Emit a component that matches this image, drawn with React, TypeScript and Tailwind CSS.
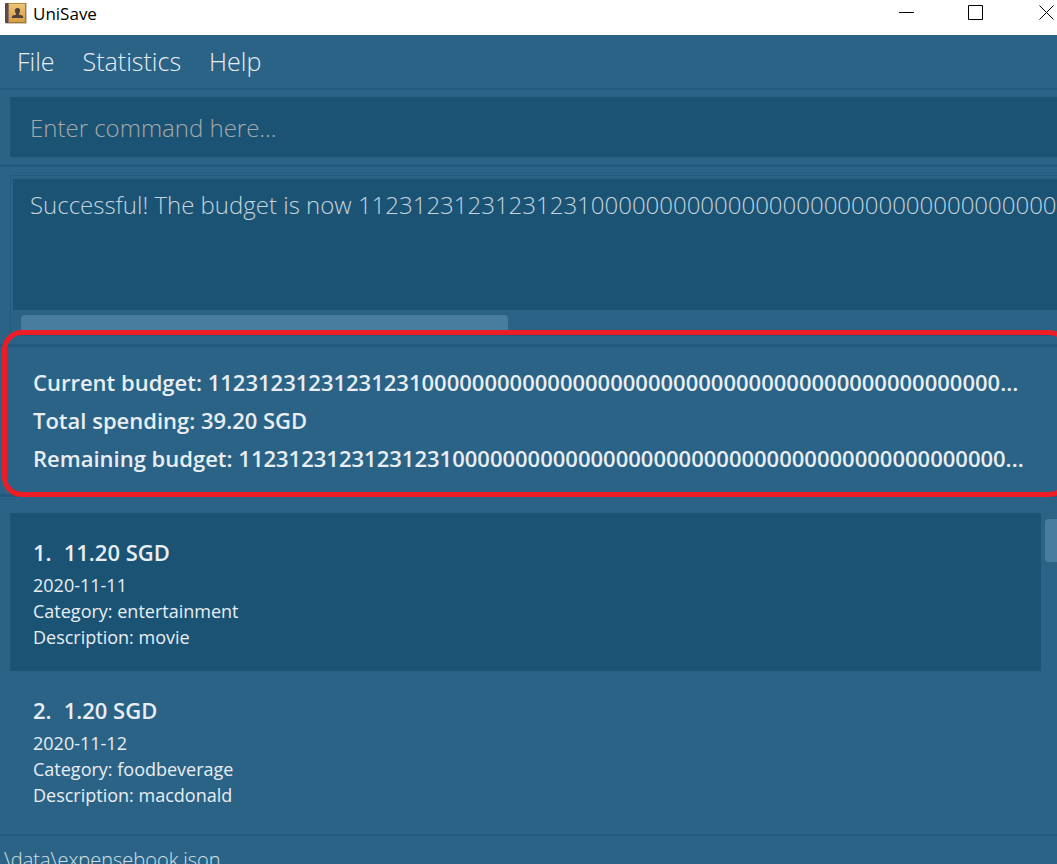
import React from "react";

const AMOUNT_PREFIX = "11231231231231231";

const budgetLines = [
  { label: "Current budget:", value: AMOUNT_PREFIX + "0".repeat(46) + "..." },
  { label: "Total spending:", value: "39.20 SGD" },
  { label: "Remaining budget:", value: AMOUNT_PREFIX + "0".repeat(44) + "..." },
];

const expenses = [
  { id: 1, amount: "11.20 SGD", date: "2020-11-11", category: "entertainment", description: "movie" },
  { id: 2, amount: "1.20 SGD", date: "2020-11-12", category: "foodbeverage", description: "macdonald" },
];

function BookIcon() {
  return (
    <svg className="h-6 w-6 shrink-0" viewBox="0 0 24 24" aria-hidden="true">
      <defs>
        <linearGradient id="cover" x1="0" y1="0" x2="0" y2="1">
          <stop offset="0" stopColor="#eec67c" />
          <stop offset="1" stopColor="#d59c3e" />
        </linearGradient>
      </defs>
      <rect x="1" y="2" width="22" height="21" rx="1" fill="#c9c5bf" />
      <rect x="1" y="2" width="5" height="20" rx="1" fill="#5d4a42" />
      <rect x="4" y="2" width="1" height="20" fill="#8a7364" />
      <rect x="5" y="2" width="17" height="20" fill="url(#cover)" />
      <path d="M5 2h17v1H5z" fill="#b98a3e" />
      <path d="M21 2h1v20h-1zM5 21h17v1H5z" fill="#a8782c" />
      <path
        d="M13.500 7c1.700 0 2.600 1.100 2.600 2.700 0 1.100-.5 2.100-1.100 2.700v1.300l3.200 .9c.6.2.9.6.9 1.200v1.100H7.900v-1.100c0-.6.3-1 .9-1.200l3.200-.9v-1.300c-.6-.6-1.100-1.600-1.100-2.700C10.900 8.100 11.800 7 13.500 7z"
        fill="#4f4236"
      />
    </svg>
  );
}

function TitleBar() {
  return (
    <header className="flex h-[35px] shrink-0 items-start justify-between bg-white text-black">
      <div className="flex items-center gap-[5px] pl-1">
        <BookIcon />
        <h1 className="pt-[2px] text-[17px] leading-6">UniSave</h1>
      </div>
      <div className="flex gap-[53px] pt-[5px] pr-[2px]">
        <button type="button" aria-label="Minimize">
          <svg className="h-4 w-4" viewBox="0 0 16 16" shapeRendering="crispEdges">
            <path d="M0 7h15v1H0z" />
          </svg>
        </button>
        <button type="button" aria-label="Maximize">
          <svg className="h-4 w-4" viewBox="0 0 16 16" fill="none" stroke="black">
            <path d="M.5.500h14v14H.5z" />
          </svg>
        </button>
        <button type="button" aria-label="Close" className="pl-[2px]">
          <svg className="h-4 w-4" viewBox="0 0 16 16" fill="none" stroke="black">
            <path d="M.5.500l14 14M14.500 .5l-14 14" />
          </svg>
        </button>
      </div>
    </header>
  );
}

export default function App() {
  return (
    <div className="flex h-screen flex-col overflow-hidden bg-[#2b6386] font-['Open_Sans','Noto_Sans',sans-serif] text-[#e8eef3]">
      <TitleBar />

      <nav className="flex h-[55px] shrink-0 items-start gap-7 border-b-2 border-[#225a7f] pt-2 pl-[17px] text-[25px] leading-9 font-light">
        <button type="button">File</button>
        <button type="button">Statistics</button>
        <button type="button">Help</button>
      </nav>

      <div className="shrink-0 border-b-3 border-[#225a7f] pt-[7px] pb-[7px] pl-[10px]">
        <input
          type="text"
          aria-label="Command"
          placeholder="Enter command here..."
          className="block h-[60px] w-full bg-[#1b5375] px-5 text-[24px] font-light outline-none placeholder:text-[#a9a9a9] placeholder:opacity-100"
        />
      </div>

      <div className="shrink-0 border-b-3 border-[#225a7f] pt-2 pb-2 pl-[10px]">
        <div className="border-y border-l border-[#225a7f] pt-[3px] pl-[2px]">
          <textarea
            readOnly
            wrap="off"
            aria-label="Result"
            value={"Successful! The budget is now " + AMOUNT_PREFIX + "0".repeat(60)}
            className="block h-[131px] w-full resize-none overflow-hidden bg-[#1b5375] px-[17px] pt-2 text-[24px] leading-9 font-light text-[#c6d3dc] outline-none"
          />
          <div className="h-[25px] pt-[5px] pl-2">
            <div className="h-[17px] w-[47%] rounded bg-[#497d9f]" />
          </div>
        </div>
      </div>

      <section className="relative h-[150px] shrink-0 border-b-3 border-[#225a7f] pt-4 pl-[33px] text-[22px] leading-[38px] font-semibold whitespace-nowrap">
        {budgetLines.map((line) => (
          <p key={line.label}>
            {line.label} {line.value}
          </p>
        ))}
        <div className="pointer-events-none absolute -top-[17px] -right-3 -bottom-[3px] left-[2px] rounded-[20px] border-5 border-[#ee1c25]" />
      </section>

      <main className="flex min-h-0 flex-1 gap-1 overflow-hidden border-b-2 border-[#225a7f] pt-4 pl-[10px]">
        <ul className="min-w-0 flex-1">
          {expenses.map((expense) => (
            <li key={expense.id} className="h-[158px] pt-5 pl-[23px] odd:bg-[#1b5375]">
              <h2 className="flex gap-3 text-[22px] leading-[39px] font-semibold">
                <span>{expense.id}.</span>
                <span>{expense.amount}</span>
              </h2>
              <p className="text-[18px] leading-[26px]">{expense.date}</p>
              <p className="text-[18px] leading-[26px]">Category: {expense.category}</p>
              <p className="text-[18px] leading-[26px]">Description: {expense.description}</p>
            </li>
          ))}
        </ul>
        <div className="w-3 pt-[6px]">
          <div className="h-[43px] rounded-l bg-[#497d9f]" />
        </div>
      </main>

      <footer className="h-7 shrink-0 overflow-hidden pt-2 pl-1 text-[20px] leading-8 font-light text-[#d5e0e7]">
        \data\expensebook.json
      </footer>
    </div>
  );
}
